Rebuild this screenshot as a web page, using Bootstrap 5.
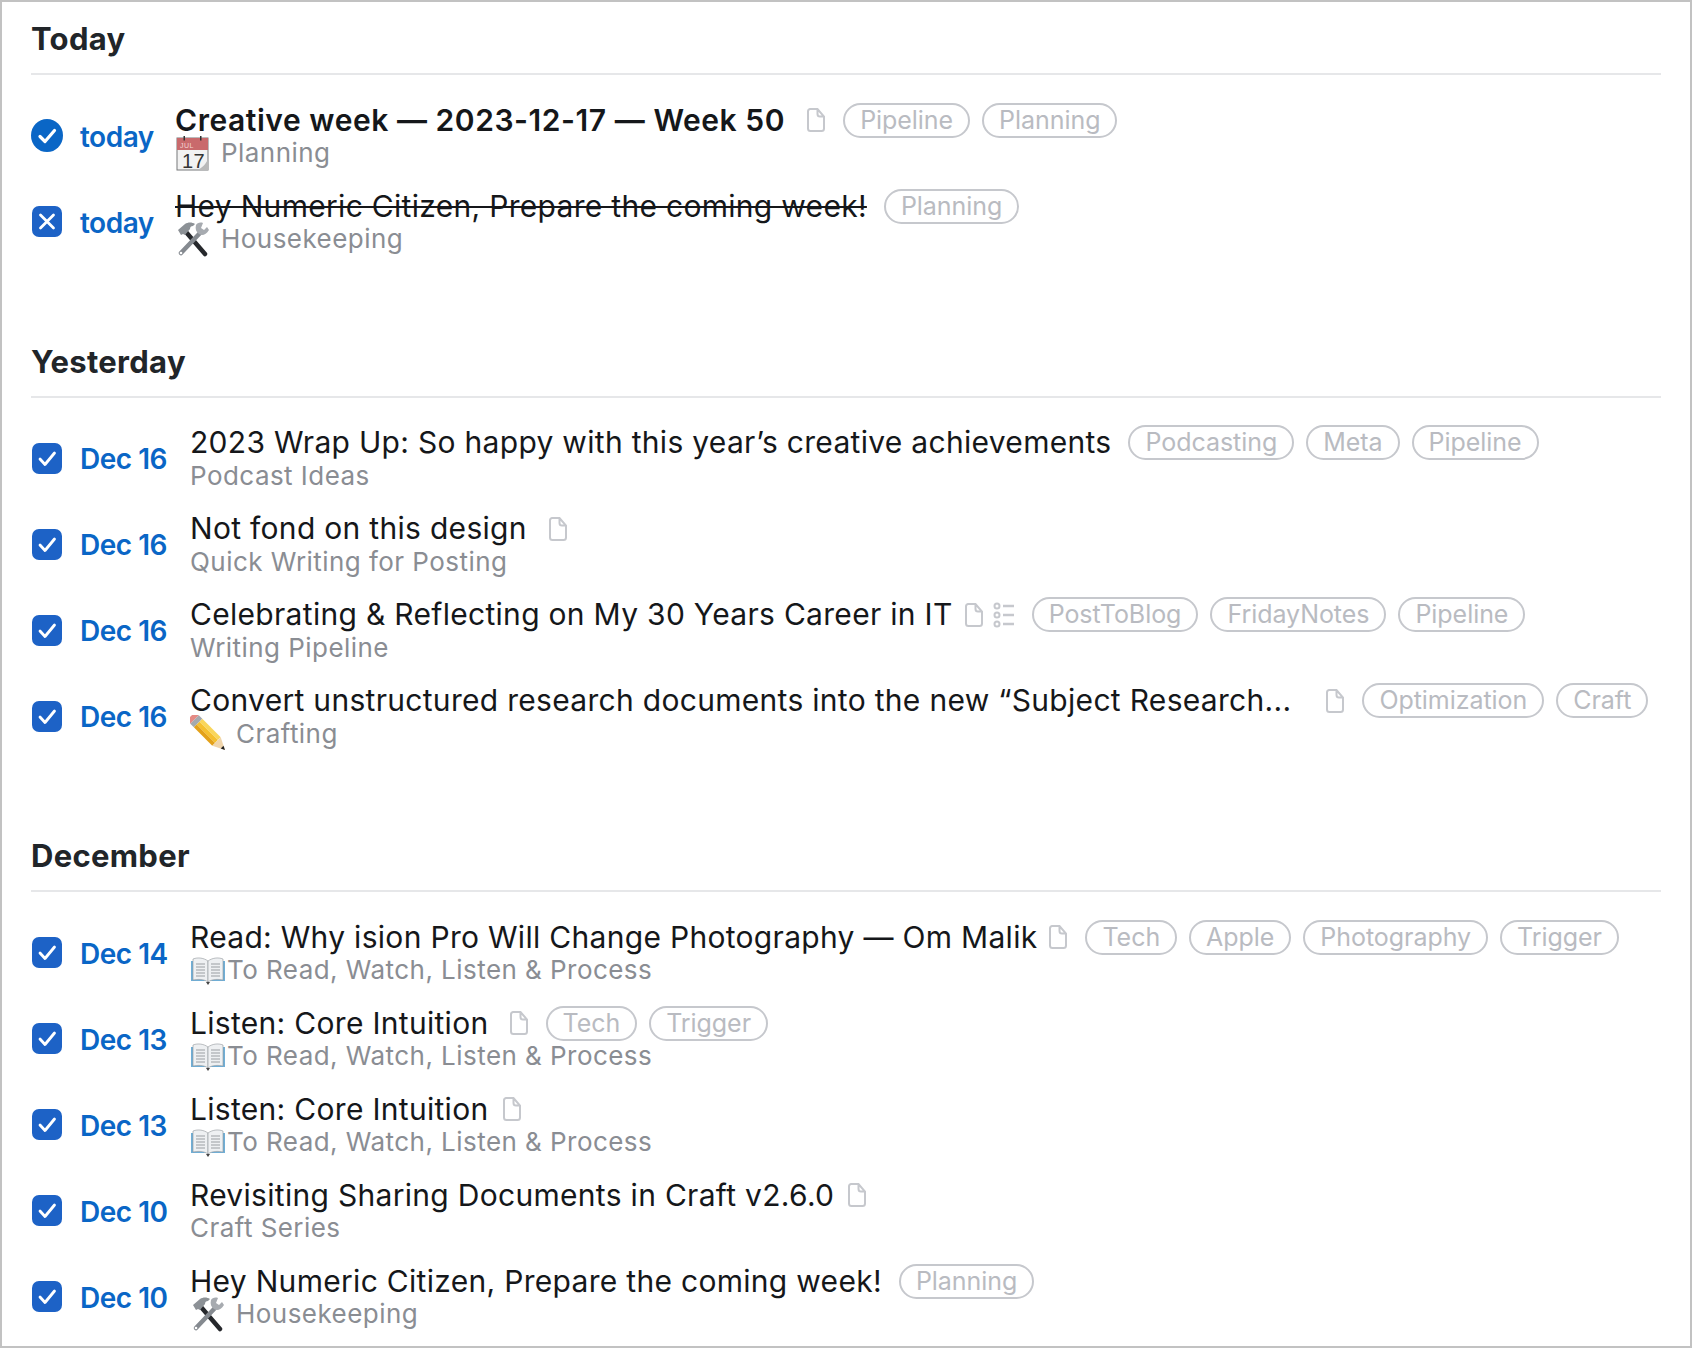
<!DOCTYPE html>
<html lang="en">
<head>
<meta charset="utf-8">
<title>Tasks</title>
<link href="https://cdn.jsdelivr.net/npm/bootstrap@5.3.0/dist/css/bootstrap.min.css" rel="stylesheet">
<style>
html,body{height:100%;margin:0;overflow:hidden;background:#fff}
body{font-family:Inter,"Liberation Sans",sans-serif}
.sheet{height:1348px;border:2px solid #c2c2c2;padding:17px 29px 0 29px;display:flex;flex-direction:column}
.sect{margin-bottom:76px}
.sect-title{font-size:31px;line-height:40px;font-weight:700;letter-spacing:.3px;color:#212529;margin:0;padding-bottom:14px;border-bottom:2px solid #e6e7e9;margin-bottom:18.5px}
.task-row{height:86px;display:flex;align-items:center}
.box-ic{width:32px;height:33px;flex:none;display:block;margin-top:-2px}
.when{font-size:28px;font-weight:600;color:#0a66c6;margin-left:17px;width:88px;flex:none;letter-spacing:-.5px;white-space:nowrap}
.when-sm{width:73px}
.body-col{margin-left:22px;min-width:0}
.title-line{height:34px;display:flex;align-items:center;white-space:nowrap}
.ttl{font-size:30px;line-height:35px;color:#15171a;letter-spacing:.3px}
.ttl-b{font-weight:600;letter-spacing:.55px}
.ttl-x{text-decoration:line-through;text-decoration-thickness:2px}
.meta-line{height:33px;margin-top:-1px;margin-bottom:1px;display:flex;align-items:center;font-size:26px;line-height:33px;color:#8a8d93;letter-spacing:.45px;white-space:nowrap}
.emo{width:36px;height:36px;flex:none;display:block;margin-right:10px}
.emo-t{margin-right:1px}
.doc-ic{width:20px;height:26px;flex:none;display:block;margin-left:21px}
.doc-mid{margin-left:20px}
.doc-tight{margin-left:13px}
.doc-tighter{margin-left:11px}
.doc-wide{margin-left:34px}
.list-ic{width:22px;height:26px;flex:none;display:block;margin-left:9px}
.tag-set{display:flex;gap:12px;margin-left:17px}
.tag-pill{height:35px;border:2px solid #c6c8cd;border-radius:18px;padding:0 15px;font-size:25px;line-height:31px;color:#b9bbc1;letter-spacing:-.05px}
</style>
</head>
<body>
<svg width="0" height="0" class="d-none">
<defs>
<symbol id="i-circ" viewBox="0 0 32 33"><ellipse cx="16" cy="16.5" rx="16" ry="16.5" fill="#0a66c6"/><path d="M9 17.5l5 5 9.5-11" fill="none" stroke="#fff" stroke-width="3.2" stroke-linecap="round" stroke-linejoin="round"/></symbol>
<symbol id="i-chk" viewBox="0 0 32 33"><rect x="1" y="1" width="30" height="31" rx="7" fill="#1d62c6"/><path d="M9 17l5 5.5 9.5-11.5" fill="none" stroke="#fff" stroke-width="2.8" stroke-linecap="round" stroke-linejoin="round"/></symbol>
<symbol id="i-x" viewBox="0 0 32 33"><rect x="1" y="1" width="30" height="31" rx="7" fill="#1d62c6"/><path d="M9.5 10l13 13M22.5 10l-13 13" fill="none" stroke="#fff" stroke-width="2.8" stroke-linecap="round"/></symbol>
<symbol id="i-doc" viewBox="0 0 20 26"><path d="M4 2h7.5L18 9.5V21.5a2.5 2.5 0 0 1-2.5 2.5h-11A2.5 2.5 0 0 1 2 21.5V4.500A2.500 2.500 0 0 1 4 2zM11.500 2v5a2.500 2.500 0 0 0 2.500 2.500h4" fill="none" stroke="#c6c8cd" stroke-width="2"/></symbol>
<symbol id="i-list" viewBox="0 0 22 26"><g fill="none" stroke="#c6c8cd" stroke-width="2"><circle cx="4" cy="4" r="2.500"/><circle cx="4" cy="13" r="2.500"/><circle cx="4" cy="22" r="2.500"/><path d="M10 4h11M10 13h11M10 22h11" stroke-width="2.400"/></g></symbol>
<symbol id="i-cal" viewBox="0 0 36 36"><rect x="2" y="3" width="31" height="32" fill="#f2f2f2" stroke="#77787a" stroke-width="1"/><rect x="2" y="3" width="31" height="12" fill="#c96a6c"/><rect x="8.500" y="1" width="1.500" height="4.500" fill="#333"/><rect x="25" y="1" width="1.500" height="4.500" fill="#333"/><text x="5" y="13" font-size="7" fill="#f3d4d4" font-family="Liberation Sans">JUL</text><text x="7" y="33" font-size="20" fill="#333" font-family="Liberation Sans">17</text><path d="M33 24c-2 5-6 9-11 11h11z" fill="#b9b9b9"/></symbol>
<symbol id="i-tools" viewBox="0 0 36 36"><path d="M30 33L11 11" stroke="#26282c" stroke-width="4.500" stroke-linecap="round"/><path d="M3 9l7-6c3-2 7-2 10 0l-2 2c-2 0-3 1-3 3l-5 6-2-1-2 1z" fill="#8c9196"/><path d="M6 32L25 12" stroke="#858a90" stroke-width="4.500" stroke-linecap="round"/><circle cx="6" cy="32" r="1.300" fill="#fff"/><path d="M21 4c-1 4 0 7 3 9 3 2 7 1 10-4l-2-3-3 3-3-2 2-5c-3-1-6 0-7 2z" fill="#a7abb0"/></symbol>
<symbol id="i-pen" viewBox="0 0 36 36"><g transform="translate(18 18) rotate(45)"><path d="M-24-3.500a2.500 2.500 0 0 1 2.500-2.500H-19V6h-2.500a2.500 2.500 0 0 1-2.500-2.500z" fill="#e58a84"/><rect x="-19" y="-6" width="5" height="12" fill="#a4a9ae"/><rect x="-14" y="-6" width="26" height="4" fill="#f9d65c"/><rect x="-14" y="-2" width="26" height="4" fill="#f5c02f"/><rect x="-14" y="2" width="26" height="4" fill="#e3a11a"/><path d="M12-6l12 6-12 6z" fill="#f0d5ac"/><path d="M20-2l4 2-4 2z" fill="#222"/></g></symbol>
<symbol id="i-book" viewBox="0 0 36 36"><path d="M1 9h34v20H1z" fill="#6faed6"/><path d="M3 7c5-2 11-1 15 2v21c-4-3-10-3-15-2z" fill="#eef0f2" stroke="#8f9498" stroke-width=".6"/><path d="M33 7c-5-2-11-1-15 2v21c4-3 10-3 15-2z" fill="#eef0f2" stroke="#8f9498" stroke-width=".6"/><path d="M6 12h9M6 15h9M6 18h9M6 21h9M6 24h9M21 12h9M21 15h9M21 18h9M21 21h9M21 24h9" stroke="#9a9ea2" stroke-width="1.100"/><path d="M16 30l2 3 2-3z" fill="#444"/></symbol>
</defs>
</svg>
<main class="sheet">
<section class="sect">
<h2 class="sect-title">Today</h2>
<div class="task-row">
<svg class="box-ic"><use href="#i-circ"/></svg><span class="when when-sm">today</span>
<div class="body-col">
<div class="title-line"><span class="ttl ttl-b">Creative week — 2023-12-17 — Week 50</span><svg class="doc-ic"><use href="#i-doc"/></svg><div class="tag-set"><span class="tag-pill">Pipeline</span><span class="tag-pill">Planning</span></div></div>
<div class="meta-line"><svg class="emo"><use href="#i-cal"/></svg>Planning</div>
</div>
</div>
<div class="task-row">
<svg class="box-ic"><use href="#i-x"/></svg><span class="when when-sm">today</span>
<div class="body-col">
<div class="title-line"><span class="ttl ttl-x">Hey Numeric Citizen, Prepare the coming week!</span><div class="tag-set"><span class="tag-pill">Planning</span></div></div>
<div class="meta-line"><svg class="emo"><use href="#i-tools"/></svg>Housekeeping</div>
</div>
</div>
</section>
<section class="sect">
<h2 class="sect-title">Yesterday</h2>
<div class="task-row">
<svg class="box-ic"><use href="#i-chk"/></svg><span class="when">Dec 16</span>
<div class="body-col">
<div class="title-line"><span class="ttl">2023 Wrap Up: So happy with this year’s creative achievements</span><div class="tag-set"><span class="tag-pill">Podcasting</span><span class="tag-pill">Meta</span><span class="tag-pill">Pipeline</span></div></div>
<div class="meta-line">Podcast Ideas</div>
</div>
</div>
<div class="task-row">
<svg class="box-ic"><use href="#i-chk"/></svg><span class="when">Dec 16</span>
<div class="body-col">
<div class="title-line"><span class="ttl">Not fond on this design</span><svg class="doc-ic"><use href="#i-doc"/></svg></div>
<div class="meta-line">Quick Writing for Posting</div>
</div>
</div>
<div class="task-row">
<svg class="box-ic"><use href="#i-chk"/></svg><span class="when">Dec 16</span>
<div class="body-col">
<div class="title-line"><span class="ttl">Celebrating &amp; Reflecting on My 30 Years Career in IT</span><svg class="doc-ic doc-tighter"><use href="#i-doc"/></svg><svg class="list-ic"><use href="#i-list"/></svg><div class="tag-set"><span class="tag-pill">PostToBlog</span><span class="tag-pill">FridayNotes</span><span class="tag-pill">Pipeline</span></div></div>
<div class="meta-line">Writing Pipeline</div>
</div>
</div>
<div class="task-row">
<svg class="box-ic"><use href="#i-chk"/></svg><span class="when">Dec 16</span>
<div class="body-col">
<div class="title-line"><span class="ttl">Convert unstructured research documents into the new “Subject Research...</span><svg class="doc-ic doc-wide"><use href="#i-doc"/></svg><div class="tag-set"><span class="tag-pill">Optimization</span><span class="tag-pill">Craft</span></div></div>
<div class="meta-line"><svg class="emo"><use href="#i-pen"/></svg>Crafting</div>
</div>
</div>
</section>
<section class="sect">
<h2 class="sect-title">December</h2>
<div class="task-row">
<svg class="box-ic"><use href="#i-chk"/></svg><span class="when">Dec 14</span>
<div class="body-col">
<div class="title-line"><span class="ttl">Read: Why ision Pro Will Change Photography — Om Malik</span><svg class="doc-ic doc-tighter"><use href="#i-doc"/></svg><div class="tag-set"><span class="tag-pill">Tech</span><span class="tag-pill">Apple</span><span class="tag-pill">Photography</span><span class="tag-pill">Trigger</span></div></div>
<div class="meta-line"><svg class="emo emo-t"><use href="#i-book"/></svg>To Read, Watch, Listen &amp; Process</div>
</div>
</div>
<div class="task-row">
<svg class="box-ic"><use href="#i-chk"/></svg><span class="when">Dec 13</span>
<div class="body-col">
<div class="title-line"><span class="ttl">Listen: Core Intuition</span><svg class="doc-ic doc-mid"><use href="#i-doc"/></svg><div class="tag-set"><span class="tag-pill">Tech</span><span class="tag-pill">Trigger</span></div></div>
<div class="meta-line"><svg class="emo emo-t"><use href="#i-book"/></svg>To Read, Watch, Listen &amp; Process</div>
</div>
</div>
<div class="task-row">
<svg class="box-ic"><use href="#i-chk"/></svg><span class="when">Dec 13</span>
<div class="body-col">
<div class="title-line"><span class="ttl">Listen: Core Intuition</span><svg class="doc-ic doc-tight"><use href="#i-doc"/></svg></div>
<div class="meta-line"><svg class="emo emo-t"><use href="#i-book"/></svg>To Read, Watch, Listen &amp; Process</div>
</div>
</div>
<div class="task-row">
<svg class="box-ic"><use href="#i-chk"/></svg><span class="when">Dec 10</span>
<div class="body-col">
<div class="title-line"><span class="ttl">Revisiting Sharing Documents in Craft v2.6.0</span><svg class="doc-ic doc-tight"><use href="#i-doc"/></svg></div>
<div class="meta-line">Craft Series</div>
</div>
</div>
<div class="task-row">
<svg class="box-ic"><use href="#i-chk"/></svg><span class="when">Dec 10</span>
<div class="body-col">
<div class="title-line"><span class="ttl">Hey Numeric Citizen, Prepare the coming week!</span><div class="tag-set"><span class="tag-pill">Planning</span></div></div>
<div class="meta-line"><svg class="emo"><use href="#i-tools"/></svg>Housekeeping</div>
</div>
</div>
</section>
</main>
<script src="https://cdn.jsdelivr.net/npm/bootstrap@5.3.0/dist/js/bootstrap.bundle.min.js"></script>
</body>
</html>
